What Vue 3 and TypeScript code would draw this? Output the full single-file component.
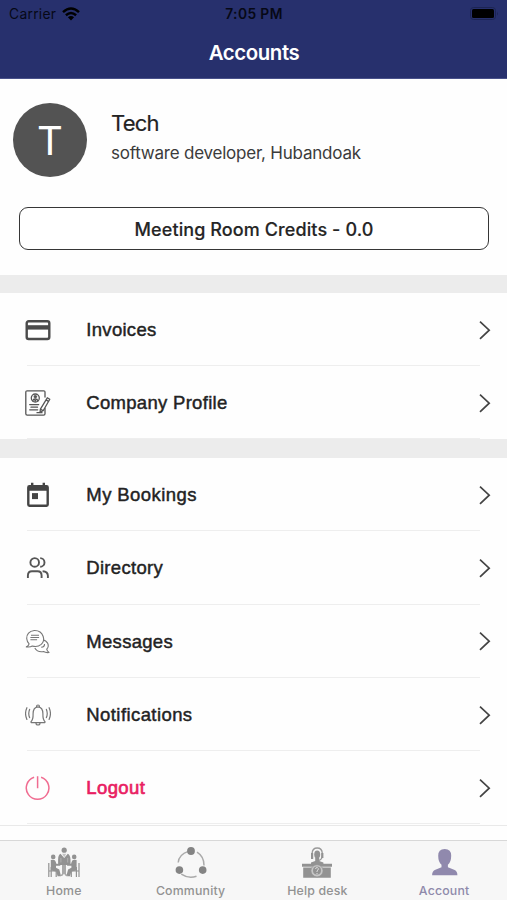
<script setup lang="ts">
interface Item {
  id: string
  label: string
}

const groups: Item[][] = [
  [
    { id: 'invoices', label: 'Invoices' },
    { id: 'company', label: 'Company Profile' },
  ],
  [
    { id: 'bookings', label: 'My Bookings' },
    { id: 'directory', label: 'Directory' },
    { id: 'messages', label: 'Messages' },
    { id: 'notifications', label: 'Notifications' },
    { id: 'logout', label: 'Logout' },
  ],
]

const tabs: Item[] = [
  { id: 'home', label: 'Home' },
  { id: 'community', label: 'Community' },
  { id: 'helpdesk', label: 'Help desk' },
  { id: 'account', label: 'Account' },
]
</script>

<template>
  <div class="screen">
    <header class="header">
      <div class="status">
        <div class="carrier">
          <span>Carrier</span>
          <svg width="18" height="14" viewBox="0 0 18 14" fill="none" stroke="#000" stroke-width="2.5">
            <path d="M1 5.1Q9 -2 17 5.1M3.9 8.2Q9 3.7 14.1 8.2" />
            <path d="M9 13.6L5.9 10.3Q9 7.6 12.1 10.3Z" fill="#000" stroke="none" />
          </svg>
        </div>
        <span class="time">7:05 PM</span>
        <div class="battery">
          <svg width="29" height="13" viewBox="0 0 29 13">
            <rect x=".5" y=".5" width="25" height="12" rx="3" fill="none" stroke="#1c2453" />
            <rect x="2" y="2" width="22" height="9" rx="1.5" fill="#000" />
            <path d="M27 4.5q1.6 2 0 4z" fill="#1c2453" />
          </svg>
        </div>
      </div>
      <h1 class="title">Accounts</h1>
    </header>

    <section class="profile">
      <div class="person">
        <div class="avatar"><span>T</span></div>
        <div class="who">
          <div class="name">Tech</div>
          <div class="role">software developer, Hubandoak</div>
        </div>
      </div>
      <button class="credits" type="button">Meeting Room Credits - 0.0</button>
    </section>

    <nav v-for="(group, g) in groups" :key="g" class="group">
      <a v-for="item in group" :key="item.id" class="row" :class="item.id">
        <span class="icon">
          <svg v-if="item.id === 'invoices'" width="26" height="26" viewBox="0 0 26 26">
            <rect x="1.7" y="4.2" width="22.6" height="17.8" rx="2" fill="none" stroke="#4b4b4b" stroke-width="2.4" />
            <path d="M1.5 8.2h23v4.4h-23z" fill="#4b4b4b" />
          </svg>
          <svg v-else-if="item.id === 'company'" width="26" height="26" viewBox="0 0 26 26" fill="none" stroke="#555" stroke-width="1.3" stroke-linecap="round" stroke-linejoin="round">
            <path d="M20 7V2.2Q20 .8 18.6 .8H2.2Q.8 .8 .8 2.2V23.8Q.8 25.2 2.2 25.2H18.6Q20 25.2 20 23.8V18.5" />
            <circle cx="10.3" cy="8" r="4" />
            <circle cx="10.3" cy="6.7" r="1.4" fill="#555" stroke-width=".6" />
            <path d="M7.7 10.8Q8.2 8.8 10.3 8.8T12.9 10.8M9.5 9.5l.8 1.4.8-1.4" />
            <path d="M4.7 14.6h9M6 17.2h6.5M4.7 19.8h8M12 22.7h5" />
            <path d="M22.3 7.8L24.8 9.2L18.3 20.5L15 22.5L15.4 19.1ZM21 9.9l2.6 1.5M15.5 19.2l2.6 1.4" fill="#fff" />
          </svg>
          <svg v-else-if="item.id === 'bookings'" width="26" height="26" viewBox="0 0 26 26">
            <path d="M6 .7h2.4v2.4h9.2V.7H20v2.4h1.6q2.3 0 2.3 2.3v17.2q0 2.3-2.3 2.3H4.4q-2.3 0-2.3-2.3V5.4q0-2.3 2.3-2.3H6zM4.5 8.8v13.8h17V8.8z" fill="#444" fill-rule="evenodd" />
            <path d="M7 11.1h6v6H7z" fill="#444" />
          </svg>
          <svg v-else-if="item.id === 'directory'" width="26" height="26" viewBox="0 0 26 26" fill="none" stroke="#555" stroke-width="1.9">
            <circle cx="9.7" cy="7.4" r="4.3" />
            <path d="M15.2 3.1A4.3 4.3 0 0 1 15.2 11.7" />
            <path d="M2.9 23v-2.5q0-4.3 4.1-4.3h5.5q4.1 0 4.1 4.3V23M17.6 16.2q5.3.3 5.3 4.6V23" />
          </svg>
          <svg v-else-if="item.id === 'messages'" width="26" height="26" viewBox="0 0 26 26" fill="none" stroke="#777" stroke-width="1.1" stroke-linejoin="round">
            <path d="M17.6 12Q21.2 12.3 22.7 15.3Q24.2 18.8 21.7 21.2Q22.2 23.4 24 24.5Q20.8 24.9 18.5 23.6Q12.5 24.7 9.8 20" fill="#fff" />
            <path d="M9.3 2.5Q1.6 3.6 1.7 10.5Q1.9 13.5 4.1 15.9Q3.7 17.8 1.3 18.9Q5.3 19.4 7.3 18Q12.4 19.5 16.2 16.4Q19.7 13.2 18.2 8.5Q16.1 2.3 9.3 2.5Z" fill="#fff" />
            <path d="M6 7.2h8M5.4 9.5h8.7M5.4 11.8h6.7M16.2 19.3q3.6-.4 3.3-3.3" />
          </svg>
          <svg v-else-if="item.id === 'notifications'" width="26" height="26" viewBox="0 0 26 26" fill="none" stroke="#777" stroke-width="1.2" stroke-linecap="round">
            <path d="M6 19.7Q8.3 17.8 8.1 11.8Q8.1 5.3 13 4.9Q17.9 5.3 17.9 11.8Q17.7 17.8 20 19.7Q20.2 20.7 19.3 20.7H6.7Q5.8 20.7 6 19.7Z" />
            <path d="M11.5 4.7Q11.5 3 13 3T14.5 4.7M11 21Q11 23 13 23T15 21" />
            <path d="M4.6 7.4Q2.9 11.5 4.6 15.6M1.9 5.7Q-.8 11.6 1.9 17.5M21.4 7.4Q23.1 11.5 21.4 15.6M24.1 5.7Q26.8 11.6 24.1 17.5" />
          </svg>
          <svg v-else width="26" height="26" viewBox="0 0 26 26" fill="none" stroke="#f06c91" stroke-width="1.5">
            <path d="M9.1 2.2A11.3 11.3 0 1 0 16.1 2.2M12.6 1.2v12" />
          </svg>
        </span>
        <span class="label">{{ item.label }}</span>
        <svg class="chevron" width="12" height="20" viewBox="0 0 12 20" fill="none" stroke="#444" stroke-width="1.7">
          <path d="M1 1.6L10.2 10.2L1 18.8" />
        </svg>
      </a>
    </nav>

    <footer class="tabs">
      <a v-for="tab in tabs" :key="tab.id" class="tab" :class="{ active: tab.id === 'account' }">
        <svg v-if="tab.id === 'home'" width="32" height="32" viewBox="0 0 32 32" fill="#929292">
          <circle cx="16.2" cy="3.2" r="2.6" /><circle cx="5.2" cy="9.9" r="2.3" /><circle cx="26.2" cy="9.9" r="2.3" />
          <path d="M12.5 6.8Q10.2 7.8 10.1 12.5V18h12.4v-5.5Q22.2 7.8 19.8 6.8L16.2 11Z" />
          <path d="M14.2 6.7L16.2 10.5L18.2 6.7Z" fill="#c4c4c4" />
          <path d="M12.9 11v4.5M19.7 11v4.5" stroke="#c4c4c4" stroke-width=".6" />
          <path d="M2.8 13q4.5-1 5 2l.5 1.8 4 .2v1.8H8v2l3.3 1.8 1.8 6.6H9.6l-1.4-4.8-5.4-.9zM28.6 13q-4.5-1-5 2l-.5 1.8-4 .2v1.8h4.3v2l-3.3 1.8-1.8 6.6H22l1.4-4.8 5.2-.9z" />
          <path d="M14 18h4v8.7l2 2.3h-2.2L16 26.8 14.2 29H12l2-2.3z" fill="#a9a9a9" />
          <path d="M.8 16v14M3.2 20v10M.5 24h7.7v6M31 16v14M28.4 20v10M31 24h-7.7v6" fill="none" stroke="#929292" stroke-width="1.2" />
        </svg>
        <svg v-else-if="tab.id === 'community'" width="32" height="32" viewBox="0 0 32 32" fill="#848484">
          <path d="M13.2 4.4Q4 7.5 3.2 15.5M22 5.1Q29.1 9.4 29 18.5M6.3 27.2Q13.4 32 21.5 29.3" fill="none" stroke="#aaa" stroke-width="1.5" />
          <circle cx="16" cy="4" r="3.9" /><circle cx="4.4" cy="23.1" r="3.8" /><circle cx="27.7" cy="23.1" r="3.8" />
        </svg>
        <svg v-else-if="tab.id === 'helpdesk'" width="32" height="32" viewBox="0 0 32 32" fill="#929292">
          <ellipse cx="16.2" cy="7.4" rx="3" ry="4" />
          <path d="M11.1 8V6.3Q11.4 1 16.2 1T21.3 6.3V8.5Q20.9 12.7 18 13.3" fill="none" stroke="#999" stroke-width="1.3" />
          <path d="M10 5.9h2.2v6H10zM20.2 5.9h2.2v5h-2.2zM14.2 11h4v3l4.2 1.5v1.2H10v-1.2l4.2-1.5zM1 16.8h30v3H1zM2.2 20.4h27.6v10.4H2.2z" />
          <circle cx="16" cy="23.8" r="6.1" fill="#c6c6c6" stroke="#929292" stroke-width=".7" />
          <circle cx="16" cy="23.5" r="4" fill="#929292" />
          <path d="M14.5 22q.4-2 2-1.3 1.9.8.3 2.4L16 24v1M16 26v1" stroke="#ddd" fill="none" stroke-width="1" />
        </svg>
        <svg v-else width="32" height="32" viewBox="0 0 32 32" fill="#9089ad">
          <path d="M16.7 2Q23.3 2 23.2 8.8Q23.1 15.5 19.9 17.8V20.3L26.1 22.7Q29.4 24.1 29.4 28.2H4.1Q4.1 24.1 7.4 22.7L13.5 20.3V17.8Q10.3 15.5 10.2 8.8Q10.1 2 16.7 2Z" />
        </svg>
        <span>{{ tab.label }}</span>
      </a>
    </footer>
  </div>
</template>

<style>
body {
  margin: 0;
  background: #fff;
}
</style>

<style scoped>
* {
  box-sizing: border-box;
}
.screen {
  width: 507px;
  height: 900px;
  overflow: hidden;
  display: flex;
  flex-direction: column;
  background: #fefefe;
  color: #232323;
  font-family: Inter, sans-serif;
}
.header {
  flex: none;
  height: 79px;
  background: #27306d;
  border-bottom: 1px solid #49518a;
}
.status {
  height: 27px;
  display: grid;
  grid-template-columns: 1fr auto 1fr;
  align-items: center;
  padding: 0 8px 0 9px;
  color: #060816;
  font-size: 13.8px;
}
.carrier {
  display: flex;
  align-items: center;
  gap: 6px;
  letter-spacing: 0.3px;
}
.time {
  font-weight: 600;
  letter-spacing: 0.4px;
}
.battery {
  display: flex;
  justify-content: flex-end;
}
.title {
  margin: 13px 0 0;
  padding-left: 1px;
  text-align: center;
  font-size: 20.4px;
  line-height: 25px;
  font-weight: 600;
  letter-spacing: -0.4px;
  color: #fff;
}
.profile {
  flex: none;
  height: 196px;
  padding: 24px 18px 0 19px;
}
.person {
  display: flex;
  align-items: center;
  gap: 24px;
  margin-left: -6px;
}
.avatar {
  width: 74px;
  height: 74px;
  border-radius: 50%;
  background: #535353;
  color: #fff;
  display: grid;
  place-items: center;
  font-size: 40px;
  font-weight: 400;
}
.name {
  font-size: 22px;
  line-height: 28px;
  margin-top: -8px;
  letter-spacing: -0.8px;
  -webkit-text-stroke: 0.2px currentColor;
}
.role {
  font-size: 17px;
  line-height: 22px;
  margin-top: 5px;
  letter-spacing: -0.22px;
  color: #3b3b3b;
  white-space: nowrap;
}
.credits {
  display: block;
  width: 470px;
  height: 43px;
  margin-top: 30px;
  padding: 1px 0 0;
  border: 1.5px solid #363636;
  border-radius: 9px;
  background: #fff;
  color: #252525;
  font: 500 18px Inter, sans-serif;
  letter-spacing: 0.1px;
  -webkit-text-stroke: 0.15px currentColor;
}
.group {
  flex: none;
  border-top: 18px solid #ececec;
}
.group + .group {
  border-top-width: 19px;
}
.row {
  height: 73.3px;
  margin: 0 16px 0 25px;
  display: flex;
  align-items: center;
  position: relative;
}
.group:not(.group + .group) .row {
  height: 73px;
}
.row::after {
  content: '';
  position: absolute;
  left: 2px;
  right: 11px;
  bottom: 0;
  height: 1px;
  background: #eee;
}
.icon {
  width: 26px;
  height: 26px;
}
.icon svg {
  display: block;
}
.label {
  flex: 1;
  margin-left: 35.3px;
  padding-top: 1px;
  font-family: 'Liberation Sans', Arial, sans-serif;
  font-size: 18.5px;
  letter-spacing: 0.3px;
  -webkit-text-stroke: 0.45px currentColor;
}
.bookings .label,
.notifications .label {
  letter-spacing: 0.42px;
}
.logout .label {
  color: #e91e63;
  letter-spacing: 0.4px;
  -webkit-text-stroke-width: 0.7px;
}
.chevron {
  flex: none;
}
.tabs {
  flex: none;
  height: 75px;
  margin-top: auto;
  border-top: 1px solid #e9e9e9;
  display: grid;
  grid-template-columns: repeat(4, 1fr);
  background: linear-gradient(#fefefe 14px, #d8d8d8 14px, #d8d8d8 15px, #f7f7f7 15px);
  padding-top: 21px;
}
.tab {
  display: flex;
  flex-direction: column;
  align-items: center;
  gap: 4px;
  padding-left: 1px;
  color: #929292;
  font-size: 12.3px;
  line-height: 16px;
  font-weight: 500;
  letter-spacing: 0.2px;
}
.tab.active {
  color: #8f8aab;
}
</style>
